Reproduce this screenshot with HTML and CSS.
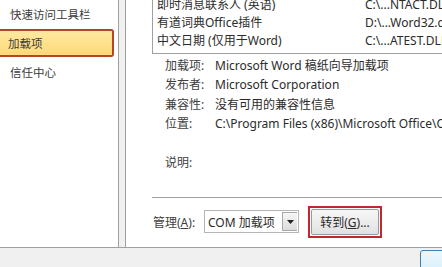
FILE: index.html
```html
<!DOCTYPE html>
<html lang="zh-CN">
<head>
    <meta charset="UTF-8">
    <title>Word 选项 - 加载项</title>
    <link rel="stylesheet" href="styles.css">
</head>
<body>
    <div class="dialog">
        <div class="main">
            <!-- left navigation -->
            <ul class="nav">
                <li class="nav-item">快速访问工具栏</li>
                <li class="nav-item active">加载项</li>
                <li class="nav-item">信任中心</li>
            </ul>
            <div class="gutter"></div>

            <div class="content">
                <div class="addin-list">
                    <div class="addin-row">
                        <span class="addin-name">即时消息联系人 (英语)</span>
                        <span class="addin-path">C:\...NTACT.DLL</span>
                    </div>
                    <div class="addin-row">
                        <span class="addin-name">有道词典Office插件</span>
                        <span class="addin-path">D:\...Word32.dll</span>
                    </div>
                    <div class="addin-row">
                        <span class="addin-name">中文日期 (仅用于Word)</span>
                        <span class="addin-path">C:\...ATEST.DLL</span>
                    </div>
                </div>

                <div class="details">
                    <div class="detail-row">
                        <span class="detail-label">加载项:</span>
                        <span class="detail-value">Microsoft Word 稿纸向导加载项</span>
                    </div>
                    <div class="detail-row">
                        <span class="detail-label">发布者:</span>
                        <span class="detail-value">Microsoft Corporation</span>
                    </div>
                    <div class="detail-row">
                        <span class="detail-label">兼容性:</span>
                        <span class="detail-value">没有可用的兼容性信息</span>
                    </div>
                    <div class="detail-row">
                        <span class="detail-label">位置:</span>
                        <span class="detail-value">C:\Program Files (x86)\Microsoft Office\Office14\ADDINS\</span>
                    </div>
                    <div class="detail-row desc">
                        <span class="detail-label">说明:</span>
                    </div>
                </div>

                <div class="separator"></div>

                <div class="manage">
                    <span class="manage-label">管理(<u>A</u>):</span>
                    <div class="combo">
                        <span class="combo-text">COM 加载项</span>
                        <span class="combo-button">
                            <svg width="7" height="4" viewBox="0 0 7 4"><path d="M0 0h7L3.5 4z" fill="#222"/></svg>
                        </span>
                    </div>
                    <div class="highlight">
                        <button class="go-button">转到(<u>G</u>)...</button>
                    </div>
                </div>
            </div>
        </div>

        <div class="footer">
            <button class="ok-button">确定</button>
        </div>
    </div>
</body>
</html>
```

FILE: styles.css
```css
body {
    margin: 0;
    background-color: #f0f0f0;
    font-family: "Noto Sans", "Noto Sans CJK SC", sans-serif;
    font-size: 12px;
    color: #2b2b2b;
    overflow: hidden;
}
u {
    text-decoration: underline;
}
.dialog {
    width: 442px;
    height: 267px;
    display: flex;
    flex-direction: column;
    overflow: hidden;
}
.main {
    display: flex;
    height: 247px;
    border-bottom: 1px solid #a0a0a0;
    flex-shrink: 0;
}
/* left navigation */
.nav {
    list-style: none;
    margin: 0;
    padding: 0;
    width: 118px;
    background-color: white;
    border-right: 1px solid #a0a0a0;
    flex-shrink: 0;
}
.nav-item {
    height: 28px;
    line-height: 28px;
    padding-left: 10px;
    font-family: "Noto Sans CJK SC", sans-serif;
    font-size: 11.5px;
    color: #3a3a3a;
}
.nav-item.active {
    width: 104px;
    height: 24px;
    line-height: 24px;
    margin-top: 1px;
    margin-bottom: 1px;
    padding-left: 8px;
    background: linear-gradient(#ffe9a0, #ffd978);
    border: 2px solid #b7432a;
    border-left-width: 0;
    border-radius: 0 3px 3px 0;
}
.gutter {
    width: 6px;
    flex-shrink: 0;
}
/* right content */
.content {
    flex: 1;
    background-color: white;
    border-left: 1px solid #a0a0a0;
    padding-left: 26px;
    overflow: hidden;
}
.addin-list {
    width: 330px;
    border: 1px solid #a0a0a0;
    border-top: none;
    padding-bottom: 3px;
    margin-top: -4px;
}
.addin-row {
    display: flex;
    height: 18px;
    line-height: 18px;
    padding-left: 4px;
    white-space: nowrap;
}
.addin-name {
    width: 208px;
    flex-shrink: 0;
}
.details {
    padding-left: 13px;
    padding-top: 2px;
}
.detail-row {
    display: flex;
    height: 19.4px;
    line-height: 19.4px;
    white-space: nowrap;
}
.detail-row.desc {
    margin-top: 19px;
}
.detail-label {
    width: 50px;
    flex-shrink: 0;
    color: #404040;
}
.separator {
    width: 320px;
    border-top: 1px solid #a0a0a0;
    margin-top: 25px;
}
.manage {
    display: flex;
    align-items: center;
    margin-top: 8px;
    margin-left: 1px;
}
.manage-label {
    width: 51px;
    color: #404040;
}
.combo {
    display: flex;
    align-items: center;
    width: 93px;
    height: 21px;
    border: 1px solid #b5b5b5;
    background-color: white;
}
.combo-text {
    flex: 1;
    padding-left: 3px;
    white-space: nowrap;
}
.combo-button {
    width: 15px;
    height: 19px;
    margin-right: 1px;
    display: flex;
    align-items: center;
    justify-content: center;
    border: 1px solid #a8a8a8;
    border-right: none;
    background: linear-gradient(#f6f6f6, #dcdcdc);
    box-sizing: border-box;
}
/* red annotation frame round the button */
.highlight {
    margin-left: 9px;
    padding: 1px;
    border: 2px solid #c0282f;
}
.go-button {
    display: block;
    width: 68px;
    height: 26px;
    font-family: inherit;
    font-size: 12px;
    color: #2b2b2b;
    border: 1px solid #9a9a9a;
    border-radius: 2px;
    background: linear-gradient(#f7f7f7, #e1e1e1);
    padding: 0;
}
/* bottom strip */
.footer {
    flex: 1;
    position: relative;
}
.ok-button {
    position: absolute;
    left: 420px;
    top: 2px;
    width: 76px;
    height: 24px;
    border: 1px solid #3c7fb1;
    border-radius: 3px;
    background: linear-gradient(#eaf6fd, #d9f0fc);
    font-family: inherit;
    font-size: 12px;
}
```
